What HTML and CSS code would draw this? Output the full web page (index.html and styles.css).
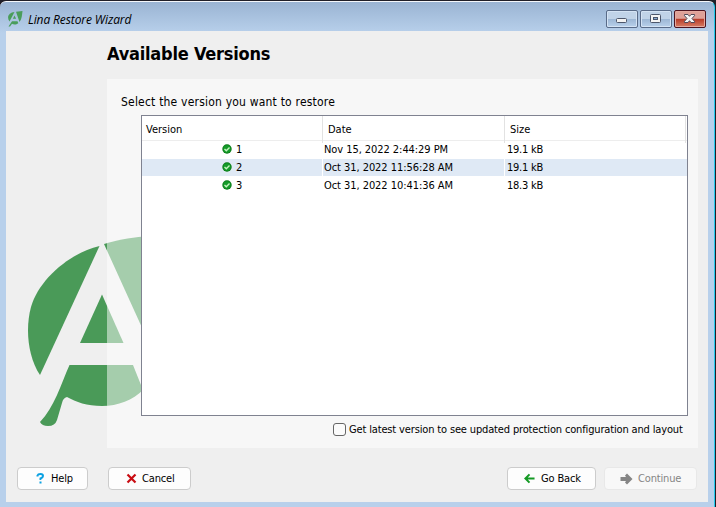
FILE: index.html
```html
<!DOCTYPE html>
<html lang="en">
<head>
<meta charset="utf-8">
<title>Lina Restore Wizard</title>
<link rel="stylesheet" href="styles.css">
</head>
<body>
<svg class="defs" width="0" height="0">
  <symbol id="check" viewBox="0 0 10 10"><circle cx="5" cy="5" r="4.7" fill="#087b16"/><circle cx="5" cy="5" r="3.7" fill="#159b2a"/><path d="M2.5 5l1.800 1.800L7.500 3.600" fill="none" stroke="#c4f5be" stroke-width="1.400"/></symbol>
</svg>
<div class="window">
  <header class="titlebar">
    <svg class="app-icon" width="16" height="16" viewBox="0 0 16 16"><path d="M7.500 1L2.500 10.500C-.8 6 2 1.500 7.500 1zM9 .8L15.500 0C15 3.500 15 8 12.500 11zM7.500 4.500l1.600 3.300H5.900zM5 10.200h5.500l.8 2C9 14 6.500 13.500 5 12.800L3 15.500H1.500z" fill="#4a9d5a"/></svg>
    <span class="title">Lina Restore Wizard</span>
    <div class="controls">
      <span class="control"><svg width="30" height="16" viewBox="0 0 30 16"><rect x="9.500" y="7.500" width="10" height="4" rx="1" fill="#f2f2f2" stroke="#4c566b"/></svg></span>
      <span class="control"><svg width="30" height="16" viewBox="0 0 30 16"><rect x="9.500" y="3.500" width="10" height="8" rx="1" fill="#f4f4f4" stroke="#4c566b"/><rect x="12.500" y="6.500" width="4" height="2" fill="#86a9d0" stroke="#4c566b"/></svg></span>
      <span class="control close"><svg width="30" height="16" viewBox="0 0 30 16"><path d="M9.500 3.500h3.500l1.500 1.800 1.500-1.800h3.500v1.200L17 7.500l2.500 2.800v1.200h-3.500l-1.500-1.800-1.500 1.800h-3.500v-1.200L12 7.500l-2.500-2.800z" fill="#f5f5f5" stroke="#4f4a59"/></svg></span>
    </div>
  </header>
  <main class="client">
    <svg class="watermark" width="143" height="200" viewBox="6 231 143 200"><g fill="#4a9a58"><path d="M99.500 246L40 375C28 357 25 329 31 307C39 279 70 253 99.500 246z"/><path d="M104 244C121 239 135 237 149 236V343z"/><path d="M102 294.500L123.500 343H80z"/><path d="M69.500 365H133L143 390C133 400 118 406 102 406C87 406 76 402 67 397Q63 398 62 403L57 420Q55 426 48 426Q42 426 40 422C54 408 61 384 69.500 365z"/></g></svg>
    <h1 class="heading">Available Versions</h1>
    <section class="panel">
      <p class="prompt">Select the version you want to restore</p>
      <div class="table">
        <div class="row head"><span class="cell">Version</span><span class="cell">Date</span><span class="cell">Size</span></div>
        <div class="row"><span class="cell version"><svg width="10" height="10"><use href="#check"/></svg>1</span><span class="cell date">Nov 15, 2022 2:44:29 PM</span><span class="cell size">19.1 kB</span></div>
        <div class="row striped"><span class="cell version"><svg width="10" height="10"><use href="#check"/></svg>2</span><span class="cell date">Oct 31, 2022 11:56:28 AM</span><span class="cell size">19.1 kB</span></div>
        <div class="row"><span class="cell version"><svg width="10" height="10"><use href="#check"/></svg>3</span><span class="cell date">Oct 31, 2022 10:41:36 AM</span><span class="cell size">18.3 kB</span></div>
      </div>
      <label class="option"><input class="box" type="checkbox"><span class="option-text">Get latest version to see updated protection configuration and layout</span></label>
    </section>
    <footer class="actions">
      <button class="button help"><svg width="9" height="11" viewBox="0 0 9 11"><path d="M1.500 3.500V2.500Q2 1 4.500 1Q7 1 7 3Q7 4.500 4.500 5.500V7M4.500 8.500v2" fill="none" stroke="#0ba1e2" stroke-width="2"/></svg><span>Help</span></button>
      <button class="button cancel"><svg width="11" height="11" viewBox="0 0 11 11"><path d="M1.500 1.500l8 8M9.500 1.500l-8 8" stroke="#c90c12" stroke-width="2.200"/></svg><span>Cancel</span></button>
      <span class="spacer"></span>
      <button class="button back"><svg width="11" height="11" viewBox="0 0 12 11"><path d="M11.500 5.500H2M6 1L1.500 5.500L6 10" fill="none" stroke="#159a25" stroke-width="2.200"/></svg><span>Go Back</span></button>
      <button class="button continue" disabled><svg width="13" height="12" viewBox="0 0 13 12"><path d="M.5 4h5.500L5 2.500L7 .5L12.500 6L7 11.500L5 9.500L6 8H.5z" fill="#858585"/></svg><span>Continue</span></button>
    </footer>
  </main>
</div>
</body>
</html>
```
FILE: styles.css
```css
* { box-sizing: border-box; }
body { margin: 0; background: #201f28; font: 11px/18px "DejaVu Sans Condensed", "Noto Sans", sans-serif; font-stretch: condensed; color: #000; overflow: hidden; }
.defs { position: absolute; }
.window { width: 715px; height: 510px; margin-top: 1px; padding: 0 6px; border-top: 1px solid #f4f7fb; border-right: 1px solid #25cbed; border-radius: 6px 6px 0 0; background: linear-gradient(#9ab4d3, #b8d0eb 31px, #b8d0eb); }
.titlebar { height: 29px; display: flex; align-items: flex-start; padding: 9px 2px 0 1px; }
.app-icon { flex: none; }
.title { margin: 0 auto 0 5px; font: italic 12px/18px "Open Sans", sans-serif; letter-spacing: -.1px; }
.controls { display: flex; gap: 2px; margin-top: -1px; }
.control { width: 32px; height: 18px; border: 1px solid #596b88; border-radius: 2px; background: linear-gradient(#c0d3e8 48%, #9cb6d4 50%, #b9d1eb); box-shadow: inset 0 0 0 1px #d4e3f4; }
.control svg { display: block; }
.close { border-color: #4d1420; background: linear-gradient(#dea198 46%, #b73a27 50%, #d77e66); box-shadow: inset 0 0 0 1px #e4aaa0; }
.client { position: relative; width: 702px; height: 471px; padding: 12px 11px 0 11px; background: #efefef; }
.watermark { position: absolute; left: 0; top: 200px; }
.heading { margin: 0 0 14px 90px; height: 22px; font: bold 18px/22px "DejaVu Sans Condensed", sans-serif; font-stretch: condensed; letter-spacing: -.22px; }
.panel { position: relative; width: 591px; height: 369px; margin-left: 90px; padding: 14px 10px 0 14px; background: rgba(255,255,255,.5); }
.prompt { margin: 0 0 4px; font: 12px/18px "DejaVu Sans Condensed", sans-serif; font-stretch: condensed; letter-spacing: .2px; }
.table { width: 547px; height: 301px; margin-left: 20px; border: 1px solid #7f8290; background: #fff; }
.row { display: grid; grid-template-columns: 181px 182px 181px; height: 18px; }
.head { height: 25px; line-height: 27px; border-bottom: 1px solid #ededed; }
.head .cell { padding-left: 5px; border-right: 1px solid #e2e2e2; }
.cell { padding-left: 1px; white-space: nowrap; }
.head .cell:first-child { padding-left: 4px; }
.date { letter-spacing: -.06px; }
.version { display: flex; align-items: center; gap: 4px; padding-left: 80px; }
.version svg { margin-top: -2px; }
.striped { height: 17px; margin-bottom: 1px; background: #dfe9f5; }
.striped .cell { height: 17px; border-right: 1px solid #fff; }
.striped .cell:last-child { border-right: 0; }
.size { padding-left: 2px; letter-spacing: -.25px; }
.option { display: flex; align-items: center; height: 18px; margin: 4px 0 0 212px; gap: 4px; white-space: nowrap; letter-spacing: -.15px; }
.option-text { padding-top: 2px; }
.box { appearance: none; flex: none; width: 13px; height: 13px; margin: 0 -1px 0 0; border: 1px solid #666; border-radius: 3px; background: #fbfbfb; }
.actions { display: flex; margin-top: 19px; }
.button { display: flex; align-items: center; justify-content: flex-start; gap: 6px; height: 23px; padding: 0; border: 1px solid #ccc; border-radius: 4px; background: #fdfdfd; font: inherit; color: #000; white-space: nowrap; letter-spacing: -.15px; }
.help { width: 71px; padding-left: 18px; }
.cancel { width: 83px; margin-left: 20px; padding-left: 17px; gap: 5px; }
.spacer { flex: 1; }
.back { width: 89px; padding-left: 16px; }
.continue { width: 93px; margin-left: 8px; padding-left: 15px; gap: 5px; border-color: #e8e8e8; background: #f8f8f8; color: #858585; }
```
